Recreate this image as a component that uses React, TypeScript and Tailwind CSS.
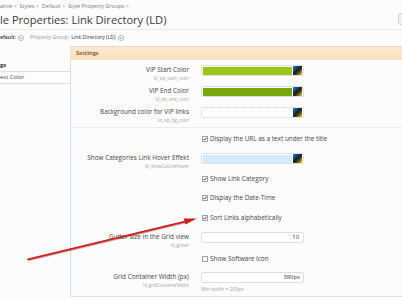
import React from "react";

const Picker = () => (
  <svg width="9" height="9" viewBox="0 0 9 9" className="shrink-0">
    <defs>
      <linearGradient id="pg" x1="0" y1="0" x2="1" y2="1">
        <stop offset="0" stopColor="#2f7fe0" />
        <stop offset="0.45" stopColor="#10243a" />
        <stop offset="0.6" stopColor="#3a3010" />
        <stop offset="1" stopColor="#f2cf2a" />
      </linearGradient>
    </defs>
    <rect x="0" y="0" width="9" height="9" fill="url(#pg)" />
  </svg>
);

const ColorInput = ({ fill, dotted }: { fill?: string; dotted?: boolean }) => (
  <div
    className={
      "w-[103px] h-[11px] rounded-[2px] bg-white flex items-center pl-[1px] pr-[1px] gap-[1px] " +
      (dotted ? "border border-dotted border-[#c9cfd6]" : "border border-[#dbe0e5]")
    }
  >
    <div className="flex-1 h-[8px]" style={{ background: fill || "transparent" }} />
    <Picker />
  </div>
);

const Check = ({ checked = true }: { checked?: boolean }) => (
  <span className="w-[6px] h-[6px] border border-[#9aa3ab] bg-white flex items-center justify-center shrink-0">
    {checked && (
      <svg width="6" height="6" viewBox="0 0 6 6" className="-mt-[1px]">
        <path d="M0.8 3.1 L2.3 4.7 L5.4 0.9" stroke="#222" strokeWidth="1.3" fill="none" />
      </svg>
    )}
  </span>
);

const CheckRow = ({ text, checked = true, h }: { text: string; checked?: boolean; h: string }) => (
  <div className={"flex " + h}>
    <div className="w-[118px]" />
    <div className="ml-[13px] flex items-center gap-[2px] h-[10px]">
      <Check checked={checked} />
      <span className="text-[6.4px] leading-[10px] text-[#444] whitespace-nowrap">{text}</span>
    </div>
  </div>
);

const Label = ({ title, sub }: { title: string; sub: string }) => (
  <div className="w-[118px] flex flex-col items-end shrink-0">
    <span className="text-[6.4px] leading-[10px] text-[#444] whitespace-nowrap">{title}</span>
    <span className="text-[4.4px] leading-[6px] text-[#a5a5a5] whitespace-nowrap">{sub}</span>
  </div>
);

const Circle = () => (
  <svg width="6" height="6" viewBox="0 0 6 6" className="shrink-0">
    <circle cx="3" cy="3" r="2.6" fill="#fff" stroke="#8d969e" strokeWidth="0.6" />
    <path d="M1.8 2.5 L3 3.7 L4.2 2.5" stroke="#555" strokeWidth="0.7" fill="none" />
  </svg>
);

export default function App() {
  return (
    <div className="relative w-[402px] h-[300px] overflow-hidden bg-[#fcfcfd] font-['Open_Sans',sans-serif]">
      {/* breadcrumb */}
      <div className="h-[13px] flex items-center text-[5.5px] text-[#6d7c8b] whitespace-nowrap">
        ance &gt;&nbsp;&nbsp;Styles &gt;&nbsp;&nbsp;Default &gt;&nbsp;&nbsp;Style Property Groups &gt;
      </div>
      {/* title */}
      <div className="h-[17px] flex items-center justify-between border-b border-[#e6eaee]">
        <span className="text-[11.1px] leading-[14px] text-[#3a3a3a] whitespace-nowrap -mt-[2px]">
          le Properties: Link Directory (LD)
        </span>
        <span className="w-[16px] h-[12px] rounded-[3px] border border-[#cfd5da] bg-[#eef0f2] -mr-[12px] -mt-[4px]" />
      </div>
      {/* filter row */}
      <div className="h-[16px] flex items-center text-[5.2px] whitespace-nowrap">
        <span className="text-[#333] font-semibold">efault:</span>
        <span className="ml-[2px]"><Circle /></span>
        <span className="ml-[6px] text-[#8f99a3]">Property Group:</span>
        <span className="ml-[2px] text-[#333]">Link Directory (LD)</span>
        <span className="ml-[2px]"><Circle /></span>
      </div>
      {/* columns */}
      <div className="flex">
        {/* sidebar */}
        <div className="w-[70px] shrink-0 pt-[14px]">
          <div className="h-[11px] flex items-center text-[5.8px] font-bold text-[#333]">gs</div>
          <div className="h-[13px] border-y border-[#d3e3ea] bg-[#fbfdfe] flex items-center text-[5.8px] text-[#4a4a4a]">
            ext Color
          </div>
        </div>
        {/* main panel */}
        <div className="flex-1 border-l border-b border-[#d3e3e7] rounded-bl-[3px] h-[251px]">
          <div className="h-[14px] -ml-[1px] rounded-tl-[2px] border-t border-[#ead9c2] bg-gradient-to-b from-[#fde9d0] to-[#fbdfbe] flex items-center pl-[6px]">
            <span className="text-[5.6px] font-bold text-[#86643a]">Settings</span>
          </div>
          <div className="pt-[5px] border-b border-[#e8edf0] h-[68px]">
            <div className="flex h-[21px]">
              <Label title="VIP Start Color" sub="ld_vip_start_color" />
              <div className="ml-[12px]"><ColorInput fill="#9cc616" /></div>
            </div>
            <div className="flex h-[21px]">
              <Label title="VIP End Color" sub="ld_vip_end_color" />
              <div className="ml-[12px]"><ColorInput fill="#79a80e" /></div>
            </div>
            <div className="flex h-[20px]">
              <Label title="Background color for VIP links" sub="ld_vip_bg_color" />
              <div className="ml-[12px]"><ColorInput dotted /></div>
            </div>
          </div>
          <div className="pt-[6px]">
            <CheckRow h="h-[19px]" text="Display the URL as a text under the title" />
            <div className="flex h-[21px]">
              <Label title="Show Categories Link Hover Effekt" sub="ld_showCatLinkHover" />
              <div className="ml-[12px]"><ColorInput fill="#d5eafa" /></div>
            </div>
            <CheckRow h="h-[19px]" text="Show Link Category" />
            <CheckRow h="h-[20px]" text="Display the Date-Time" />
            <CheckRow h="h-[19px]" text="Sort Links alphabetically" />
            <div className="flex h-[22px]">
              <Label title="Gutter size in the Grid view" sub="ld_gutter" />
              <div className="ml-[12px] w-[103px] h-[11px] rounded-[2px] border border-[#dbe0e5] bg-white flex items-center justify-end pr-[4px] text-[5.8px] text-[#333]">
                10
              </div>
            </div>
            <CheckRow h="h-[18px]" text="Show Software Icon" checked={false} />
            <div className="flex h-[24px]">
              <Label title="Grid Container Width (px)" sub="ld_gridContainerWidth" />
              <div className="ml-[12px] flex flex-col">
                <div className="w-[103px] h-[11px] rounded-[2px] border border-[#dbe0e5] bg-white flex items-center justify-end pr-[3px] text-[5.8px] text-[#333]">
                  380px
                </div>
                <span className="mt-[3px] text-[5px] leading-[6px] text-[#a3a3a3] whitespace-nowrap">Min width = 200px</span>
              </div>
            </div>
          </div>
        </div>
      </div>
      {/* red arrow */}
      <svg className="absolute left-0 top-0 pointer-events-none" width="402" height="300" viewBox="0 0 402 300">
        <line x1="28" y1="260" x2="186" y2="222" stroke="#7a1010" strokeOpacity="0.35" strokeWidth="2.6" />
        <line x1="28" y1="259.3" x2="186" y2="221.4" stroke="#d02020" strokeWidth="1.7" strokeLinecap="round" />
        <polygon points="197,218.6 185.4,224.6 183.6,218.4" fill="#d02020" />
      </svg>
    </div>
  );
}
